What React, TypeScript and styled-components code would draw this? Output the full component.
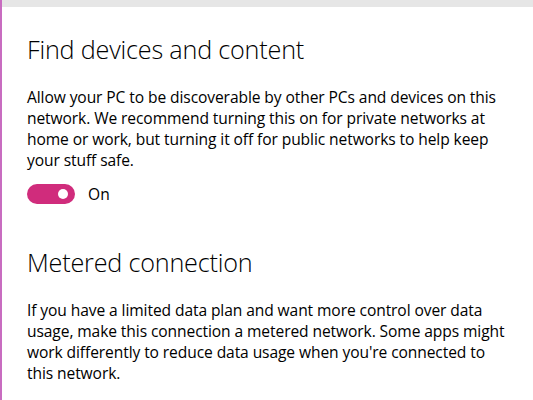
import * as React from 'react';
import styled, { createGlobalStyle } from 'styled-components';

const GlobalStyle = createGlobalStyle`
    html, body {
        margin: 0;
        padding: 0;
        background: #ffffff;
    }
    body {
        font-family: 'Open Sans', 'Noto Sans', sans-serif;
        color: #000;
    }
`;

const Page = styled.div`
    width: 533px;
    height: 400px;
    overflow: hidden;
    box-sizing: border-box;
    border-left: 2px solid #c86cc0;
    display: flex;
    flex-direction: column;
`;

const TopBar = styled.div`
    height: 7px;
    background: #e6e6e6;
    flex-shrink: 0;
`;

const Content = styled.div`
    padding: 25px 0 0 25px;
    display: flex;
    flex-direction: column;
`;

const Section = styled.section`
    display: flex;
    flex-direction: column;
    margin-bottom: 40px;
`;

const Heading = styled.h2`
    margin: 0 0 21px;
    font-size: 25.2px;
    font-weight: 300;
    line-height: 34px;
    letter-spacing: -0.2px;
`;

const Body = styled.p`
    margin: 0;
    width: 484px;
    font-size: 15.6px;
    line-height: 21px;
    letter-spacing: -0.1px;
`;

const ToggleRow = styled.div`
    display: flex;
    align-items: center;
    gap: 13px;
    margin-top: 12px;
`;

const Track = styled.button<{ $on: boolean }>`
    width: 48px;
    height: 20px;
    border-radius: 10px;
    border: none;
    padding: 0;
    background: ${(p) => (p.$on ? '#d02c7c' : '#ccc')};
    position: relative;
    cursor: pointer;
`;

const Knob = styled.span<{ $on: boolean }>`
    position: absolute;
    top: 5px;
    left: ${(p) => (p.$on ? '31px' : '7px')};
    width: 10px;
    height: 10px;
    border-radius: 50%;
    background: #fff;
`;

const ToggleLabel = styled.span`
    font-size: 15.6px;
`;

export default function App() {
    const [on, setOn] = React.useState(true);
    return (
        <>
            <GlobalStyle />
            <Page>
                <TopBar />
                <Content>
                    <Section>
                        <Heading>Find devices and content</Heading>
                        <Body>
                            Allow your PC to be discoverable by other PCs and devices on this network. We
                            recommend turning this on for private networks at home or work, but turning it off
                            for public networks to help keep your stuff safe.
                        </Body>
                        <ToggleRow>
                            <Track $on={on} onClick={() => setOn(!on)}>
                                <Knob $on={on} />
                            </Track>
                            <ToggleLabel>{on ? 'On' : 'Off'}</ToggleLabel>
                        </ToggleRow>
                    </Section>
                    <Section>
                        <Heading>Metered connection</Heading>
                        <Body>
                            If you have a limited data plan and want more control over data usage, make this
                            connection a metered network. Some apps might work differently to reduce data usage
                            when you're connected to this network.
                        </Body>
                    </Section>
                </Content>
            </Page>
        </>
    );
}
